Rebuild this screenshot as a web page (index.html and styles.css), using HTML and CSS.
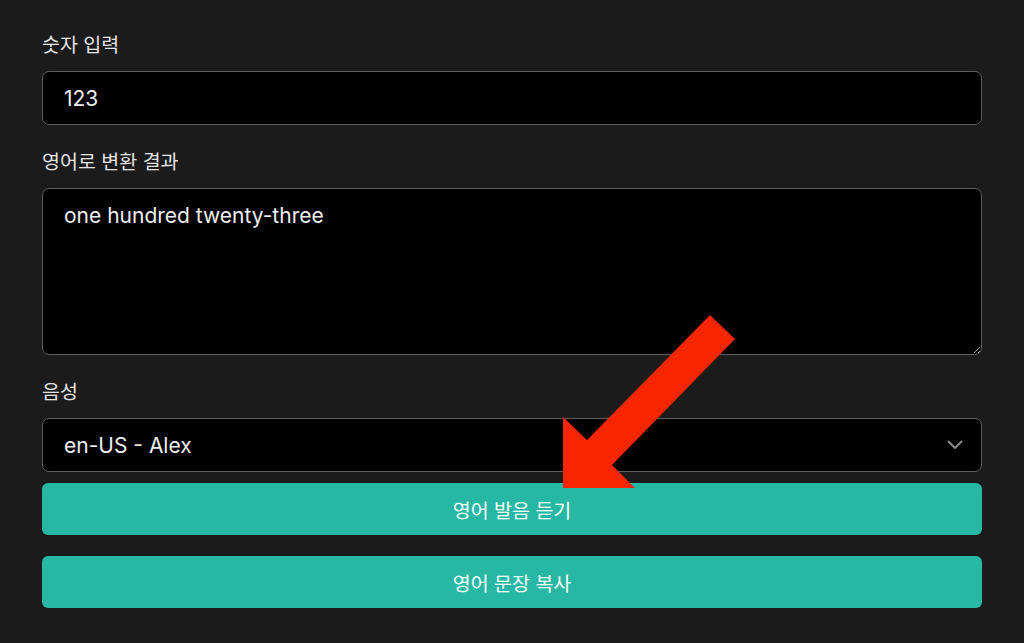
FILE: index.html
```html
<!DOCTYPE html>
<html lang="ko">
<head>
<meta charset="utf-8">
<link rel="stylesheet" href="styles.css">
</head>
<body>
<main class="form">
  <label class="label" for="num">숫자 입력</label>
  <input class="control input" id="num" type="text" value="123">

  <label class="label" for="out">영어로 변환 결과</label>
  <textarea class="control textarea" id="out">one hundred twenty-three</textarea>

  <label class="label" for="voice">음성</label>
  <div class="select-wrap">
    <select class="control select" id="voice">
      <option>en-US - Alex</option>
    </select>
    <svg class="chevron" width="16" height="10" viewBox="0 0 16 10"><path d="M1.5 1.5 L8 8 L14.5 1.5" fill="none" stroke="#8a8a8a" stroke-width="2" stroke-linecap="round" stroke-linejoin="round"/></svg>
  </div>
  <button class="btn btn-first" type="button">영어 발음 듣기</button>
  <button class="btn" type="button">영어 문장 복사</button>
</main>
<svg class="arrow" width="1024" height="643" viewBox="0 0 1024 643">
  <polygon points="710,315 735,339 612,465 635,488 563,488 563,417 587,440" fill="#f72500"/>
</svg>
</body>
</html>
```
FILE: styles.css
```css
html, body {
  margin: 0;
  padding: 0;
  background: #1b1b1c;
  height: 643px;
  overflow: hidden;
}
body {
  font-family: Inter, "Noto Sans CJK KR", sans-serif;
  font-size: 20px;
  color: #e6e6e6;
  position: relative;
}
.form {
  display: flex;
  flex-direction: column;
  padding: 31px 42px 0 42px;
}
.label {
  display: block;
  line-height: 29px;
  height: 29px;
  margin-bottom: 11px;
  color: #e4e4e4;
  font-size: 19.5px;
}
.control {
  box-sizing: border-box;
  width: 940px;
  background: #000;
  color: #f0f0f0;
  border: 1px solid #5e5e5e;
  border-radius: 7px;
  font-family: Inter, "Noto Sans CJK KR", sans-serif;
  font-size: 21px;
  padding: 0 21px;
  margin: 0 0 23px 0;
  outline: none;
}
.input {
  height: 54px;
}
.textarea {
  height: 167px;
  padding-top: 12px;
  line-height: 29px;
  resize: vertical;
  margin-bottom: 23px;
}
.select-wrap {
  position: relative;
  width: 940px;
  margin-bottom: 11px;
}
.select {
  appearance: none;
  -webkit-appearance: none;
  height: 54px;
  margin: 0;
  display: block;
}
.chevron {
  position: absolute;
  right: 19px;
  top: 22px;
}
.btn {
  box-sizing: border-box;
  width: 940px;
  height: 52px;
  border: none;
  border-radius: 6px;
  background: #27b8a5;
  color: #ffffff;
  font-family: Inter, "Noto Sans CJK KR", sans-serif;
  font-size: 19.5px;
  padding: 0;
}
.btn-first {
  margin-bottom: 21px;
}
.arrow {
  position: absolute;
  left: 0;
  top: 0;
  pointer-events: none;
}
```
